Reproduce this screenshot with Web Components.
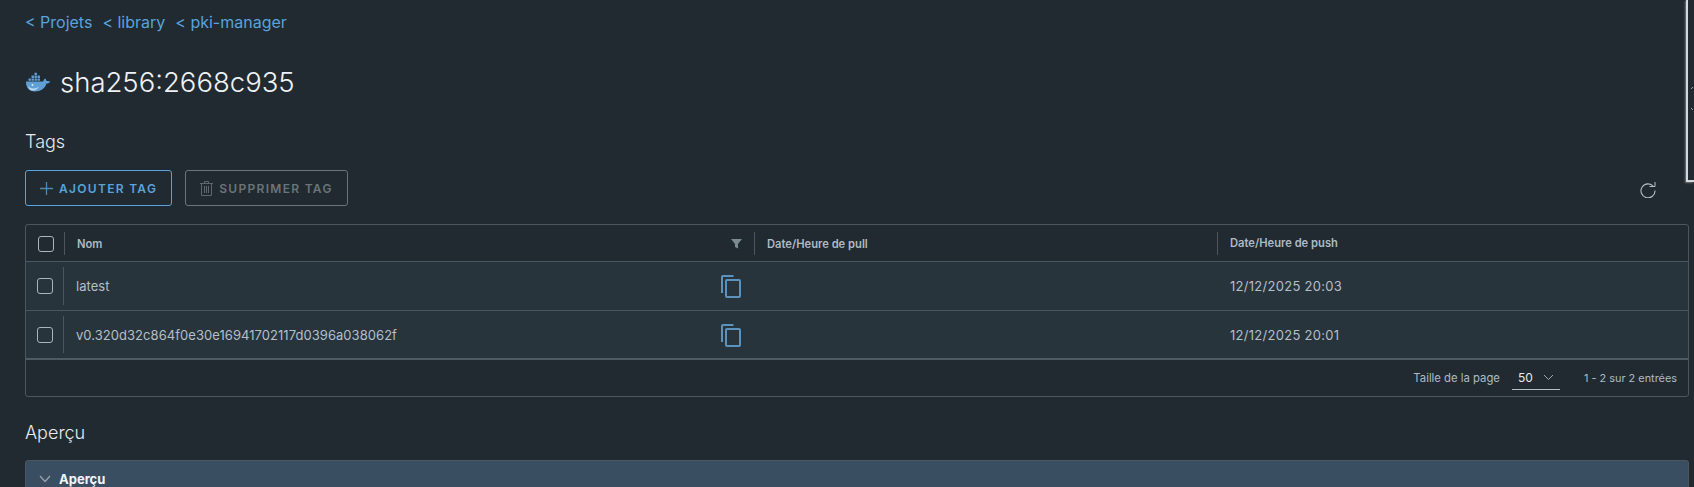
<!DOCTYPE html>
<html lang="fr">
<head>
<meta charset="utf-8">
<title>sha256:2668c935</title>
<style>
  html, body { margin: 0; height: 487px; overflow: hidden; background: #212a30; }
  body { font-family: Inter, "Liberation Sans", sans-serif; color: #e6ebef; }
</style>
</head>
<body>
<artifact-page></artifact-page>
<script>
const COPY_ICON = `<svg width="22" height="24" viewBox="0 0 22 24" fill="none" stroke="#5b93bd" stroke-width="2">
  <path d="M13.5 2H3a1 1 0 0 0-1 1v16"/><rect x="6" y="6" width="14" height="17" rx="1"/></svg>`;

class CheckBox extends HTMLElement {
    constructor() {
        super();
        this.attachShadow({ mode: 'open' }).innerHTML = `
<style>
  :host { display: block; width: 16px; height: 16px; box-sizing: border-box; border: 1px solid #a9b5bd; border-radius: 3px; }
</style>`;
    }
}

class BackLink extends HTMLElement {
    constructor() {
        super();
        this.attachShadow({ mode: 'open' }).innerHTML = `
<style>
  :host { display: inline-block; color: #57a3dc; font-size: 16px; line-height: 20px; }
</style>
&lt; <slot></slot>`;
    }
}

class ActionButton extends HTMLElement {
    constructor() {
        super();
        this.attachShadow({ mode: 'open' }).innerHTML = `
<style>
  :host { display: inline-flex; align-items: center; gap: 6px; box-sizing: border-box; height: 36px; padding: 0 14px;
    border: 1px solid #57a3dc; border-radius: 3px; color: #57a3dc; font-size: 12px; font-weight: 600; letter-spacing: 1.3px; }
  :host([disabled]) { border-color: #6b7479; color: #6b7479; }
  ::slotted(svg) { flex: none; }
</style>
<slot name="icon"></slot><slot></slot>`;
    }
}

class GridRow extends HTMLElement {
    constructor() {
        super();
        this.attachShadow({ mode: 'open' }).innerHTML = `
<style>
  :host { display: grid; grid-template-columns: 38px 690px 463px 1fr; height: 48px; background: #28343c; border-bottom: 1px solid #4a5660;
    color: #b4bfc7; font-size: 13px; letter-spacing: .05px; }
  :host(:last-of-type) { border-bottom: 2px solid #4e5a64; height: 47px; }
  .check { display: flex; align-items: center; justify-content: center; padding-left: 1px; border-right: 1px solid #4a5660; margin: 5px 0; }
  .cell { display: flex; align-items: center; padding-left: 12px; }
  .name { justify-content: space-between; padding-right: 12px; }
  .copy { display: flex; }
  .push { padding-left: 13px; letter-spacing: .28px; }
</style>
<div class="check"><check-box></check-box></div>
<div class="cell name"><slot></slot><span class="copy">${COPY_ICON}</span></div>
<div class="cell"></div>
<div class="cell push"><slot name="push"></slot></div>`;
    }
}

class TagGrid extends HTMLElement {
    constructor() {
        super();
        this.attachShadow({ mode: 'open' }).innerHTML = `
<style>
  :host { display: block; border: 1px solid #4a5660; border-radius: 3px; }
  .head { display: grid; grid-template-columns: 39px 690px 463px 1fr; height: 36px; border-bottom: 1px solid #4a5660;
    color: #adbbc4; font-size: 11.2px; font-weight: 600; }
  .head > div { display: flex; align-items: center; }
  .head > div:not(:first-child) { padding-left: 12px; }
  .sep { border-right: 1px solid #4a5660; margin: 7px 0 6px; }
  .check { justify-content: center; padding-left: 1px; }
  .name { justify-content: space-between; padding-right: 12px; }
  .foot { display: flex; justify-content: flex-end; align-items: center; height: 36px; padding-right: 11px; color: #adbbc4; font-size: 11.3px; }
  .size { display: flex; align-items: center; justify-content: space-between; box-sizing: border-box; width: 48px; height: 24px;
    margin: 0 24px 0 12px; padding: 2px 6px; border-bottom: 1px solid #b4bfc7; color: #e6ebef; font-size: 12px; }
  .count { font-size: 10.9px; }
</style>
<div class="head">
  <div class="check sep"><check-box></check-box></div>
  <div class="name sep">Nom
    <svg width="11" height="11" viewBox="0 0 11 11" fill="#7c8a92"><path d="M0 1h11L7 6v4.500L4 9V6z"/></svg></div>
  <div class="sep">Date/Heure de pull</div>
  <div>Date/Heure de push</div>
</div>
<slot></slot>
<div class="foot">
  <span>Taille de la page</span>
  <span class="size">50
    <svg width="11" height="7" viewBox="0 0 11 7" fill="none" stroke="#9aa6ae" stroke-width="1"><path d="M1 1l4.500 4.500L10 1"/></svg></span>
  <span class="count">1 - 2 sur 2 entrées</span>
</div>`;
    }
}

class ArtifactPage extends HTMLElement {
    constructor() {
        super();
        this.attachShadow({ mode: 'open' }).innerHTML = `
<style>
  :host { display: block; position: relative; height: 487px; box-sizing: border-box; padding: 12px 5px 0 25px; overflow: hidden; }
  nav { display: flex; gap: 10px; height: 20px; }
  h1 { display: flex; align-items: center; gap: 9px; margin: 32px 0 0; height: 36px; font-size: 27.5px; font-weight: 300; color: #eef2f5; }
  h2 { margin: 0; font-size: 18px; line-height: 22px; font-weight: 300; color: #e6ebef; }
  .tags { margin-top: 31px; }
  .bar { display: flex; align-items: center; gap: 13px; margin: 17px 0 18px; }
  .refresh { margin-left: auto; margin-right: 33px; margin-top: 3px; display: flex; }
  .overview { margin-top: 25px; }
  .panel { display: flex; align-items: center; gap: 8px; height: 36px; margin-top: 16px; padding: 0 13px;
    background: #3a4e62; border: 1px solid #4a5660; border-radius: 3px 3px 0 0; font-size: 13px; font-weight: 700; color: #f2f5f7; }
  /* edge of the window lying over the page */
  .edge { position: absolute; right: 0; top: 0; width: 6px; height: 180px; background: #212a30;
    border-left: 2px solid #d5d8da; border-bottom: 2px solid #d5d8da; box-shadow: -1px 1px 2px rgba(213, 216, 218, .45); }
  .edge svg { position: absolute; left: 3px; top: 86px; }
</style>
<nav><back-link>Projets</back-link><back-link>library</back-link><back-link>pki-manager</back-link></nav>
<h1>
  <svg width="26" height="20" viewBox="0 0 26 20">
    <g fill="#5f9fd6">
      <path d="M1 9.500h17.200c.3-1.600 1.300-2.500 2-3 .7.7 1.200 1.600 1.200 2.600 1.400-.4 2.800-.1 3.800.5-.8 1.600-2.200 2.100-3.800 2C20 17 15.500 19.500 10 19.500 4 19.500 .8 15.500 1 9.500z"/>
      <path d="M3.500 6.500h2.400v2.300H3.500zM6.500 6.500h2.400v2.300H6.500zM9.500 6.500h2.400v2.300H9.500zM12.500 6.500h2.400v2.300h-2.400zM6.500 3.600h2.400v2.300H6.500zM9.500 3.600h2.400v2.300H9.500zM12.500 3.600h2.400v2.300h-2.400zM9.500 .7h2.400V3H9.500z"/>
    </g>
    <path d="M3 14c3 3.500 8 3 11 .5-2 3.500-5 4.500-7.500 4C4.500 18 3.500 16 3 14z" fill="#b9d6ee"/>
    <circle cx="7.500" cy="13" r="1" fill="#dcebf7"/>
  </svg>
  sha256:2668c935
</h1>
<h2 class="tags">Tags</h2>
<div class="bar">
  <action-button>
    <svg slot="icon" width="13" height="13" viewBox="0 0 13 13" stroke="#4f88af" stroke-width="1.300"><path d="M6.500 0v13M0 6.500h13"/></svg>
    AJOUTER TAG</action-button>
  <action-button disabled>
    <svg slot="icon" width="13" height="15" viewBox="0 0 13 15" fill="none" stroke="#5e676c"><path d="M0 2.500h13M4.500 2.500V.5h4v2M1.500 2.500v12h10v-12M4.500 5v7M6.500 5v7M8.500 5v7"/></svg>
    SUPPRIMER TAG</action-button>
  <span class="refresh">
    <svg width="16" height="16" viewBox="0 0 16 16" fill="none" stroke="#b4bfc7" stroke-width="1.100">
      <path d="M13.500 4.500A7 7 0 1 0 15 8.500"/><path d="M9.500 4.500h5.500V0" stroke-width="1"/></svg>
  </span>
</div>
<tag-grid>
  <grid-row>latest<span slot="push">12/12/2025 20:03</span></grid-row>
  <grid-row>v0.320d32c864f0e30e16941702117d0396a038062f<span slot="push">12/12/2025 20:01</span></grid-row>
</tag-grid>
<h2 class="overview">Aperçu</h2>
<div class="panel">
  <svg width="12" height="8" viewBox="0 0 12 8" fill="none" stroke="#9aa6ae" stroke-width="1.200"><path d="M1 1l5 5.500L11 1"/></svg>
  <span>Aperçu</span>
</div>
<div class="edge">
  <svg width="4" height="26" viewBox="0 0 4 26" fill="none" stroke="#9aa6ae"><path d="M0 3l2-2M0 22l2 2"/></svg>
</div>`;
    }
}

customElements.define('check-box', CheckBox);
customElements.define('back-link', BackLink);
customElements.define('action-button', ActionButton);
customElements.define('grid-row', GridRow);
customElements.define('tag-grid', TagGrid);
customElements.define('artifact-page', ArtifactPage);
</script>
</body>
</html>
